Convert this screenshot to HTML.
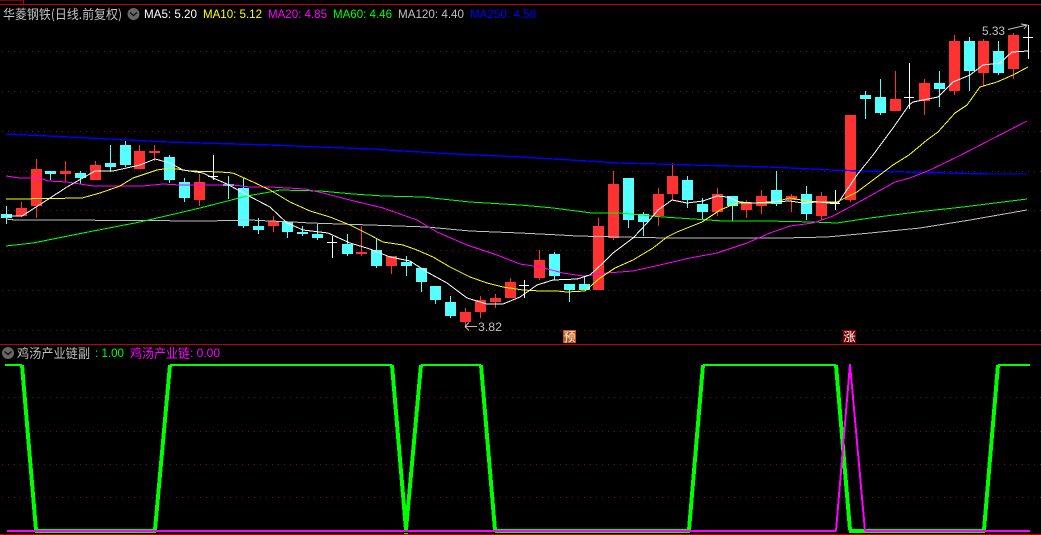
<!DOCTYPE html>
<html>
<head>
<meta charset="utf-8">
<style>
html,body{margin:0;padding:0;background:#000;width:1041px;height:535px;overflow:hidden}
svg{display:block}
text{font-family:"Liberation Sans","Noto Sans CJK SC",sans-serif;font-size:12px}
.cn{font-family:"WenQuanYi Zen Hei","Noto Sans CJK SC",sans-serif;font-size:13px}
.l{fill:none;stroke-width:1;shape-rendering:crispEdges}
.g{stroke:#7a1414;stroke-width:1;stroke-dasharray:1 5;shape-rendering:crispEdges}
</style>
</head>
<body>
<svg width="1041" height="535" viewBox="0 0 1041 535" xmlns="http://www.w3.org/2000/svg">
<rect width="1041" height="535" fill="#000"/>
<!-- frame -->
<g shape-rendering="crispEdges" fill="#c00000">
<rect x="0" y="4" width="1041" height="1"/>
<rect x="0" y="0" width="23" height="1" fill="#800000"/>
<rect x="23" y="0" width="1" height="4"/>
<rect x="0" y="344" width="1041" height="1"/>
<rect x="0" y="534" width="1041" height="1"/>
</g>
<!-- grid -->
<path class="g" d="M2 51.5H1041M2 91.5H1041M2 131.5H1041M2 171.5H1041M2 210.5H1041M2 250.5H1041M2 290.5H1041M2 330.5H1041M2 397.5H1041M2 431.5H1041M2 464.5H1041M2 497.5H1041"/>
<!-- red candles -->
<path shape-rendering="crispEdges" fill="#ff3232" d="M16 208h11v8h-11zM21 202h1v15h-1zM31 169h11v37h-11zM36 159h1v59h-1zM60 171h11v3h-11zM65 161h1v21h-1zM90 165h11v15h-11zM95 161h1v19h-1zM134 151h11v18h-11zM139 145h1v24h-1zM149 151h11v2h-11zM154 145h1v16h-1zM194 182h11v18h-11zM199 174h1v32h-1zM268 221h11v5h-11zM273 216h1v16h-1zM356 252h11v2h-11zM361 226h1v30h-1zM386 256h11v10h-11zM391 256h1v18h-1zM460 312h11v10h-11zM465 308h1v20h-1zM475 300h11v12h-11zM480 296h1v22h-1zM490 298h11v4h-11zM495 294h1v14h-1zM505 282h11v16h-11zM510 278h1v20h-1zM534 260h11v18h-11zM539 250h1v30h-1zM593 226h11v64h-11zM598 218h1v72h-1zM608 184h11v54h-11zM613 171h1v69h-1zM653 194h11v22h-11zM658 188h1v38h-1zM667 176h11v18h-11zM672 163h1v37h-1zM712 194h11v18h-11zM717 188h1v28h-1zM741 202h11v8h-11zM746 200h1v18h-1zM756 196h11v10h-11zM761 190h1v24h-1zM786 196h11v4h-11zM791 194h1v18h-1zM816 196h11v20h-11zM821 192h1v28h-1zM845 115h11v85h-11zM850 115h1v87h-1zM890 99h11v12h-11zM895 71h1v40h-1zM919 83h11v18h-11zM924 79h1v36h-1zM949 41h11v50h-11zM954 35h1v60h-1zM978 41h11v32h-11zM983 39h1v47h-1zM1008 35h11v34h-11zM1013 33h1v46h-1z"/>
<!-- cyan candles -->
<path shape-rendering="crispEdges" fill="#54ffff" d="M1 214h11v4h-11zM6 206h1v18h-1zM45 171h11v3h-11zM50 171h1v9h-1zM75 173h11v5h-11zM80 171h1v13h-1zM105 163h11v4h-11zM110 145h1v27h-1zM120 145h11v20h-11zM125 141h1v26h-1zM164 157h11v23h-11zM169 155h1v28h-1zM179 182h11v16h-11zM184 178h1v24h-1zM223 184h11v2h-11zM228 176h1v23h-1zM238 188h11v38h-11zM243 178h1v50h-1zM253 226h11v4h-11zM258 218h1v16h-1zM282 222h11v10h-11zM287 222h1v16h-1zM297 232h11v2h-11zM302 226h1v10h-1zM312 234h11v4h-11zM317 224h1v16h-1zM342 244h11v10h-11zM347 234h1v22h-1zM371 250h11v16h-11zM376 238h1v30h-1zM401 262h11v4h-11zM406 256h1v20h-1zM416 268h11v14h-11zM421 268h1v24h-1zM430 286h11v14h-11zM435 286h1v18h-1zM445 302h11v14h-11zM450 296h1v22h-1zM549 254h11v22h-11zM554 252h1v28h-1zM564 284h11v6h-11zM569 284h1v18h-1zM579 284h11v6h-11zM584 276h1v14h-1zM623 178h11v42h-11zM628 178h1v50h-1zM638 214h11v8h-11zM643 212h1v24h-1zM682 180h11v20h-11zM687 176h1v32h-1zM697 204h11v8h-11zM702 198h1v22h-1zM727 196h11v10h-11zM732 196h1v25h-1zM771 190h11v14h-11zM776 171h1v35h-1zM801 194h11v20h-11zM806 186h1v34h-1zM860 95h11v4h-11zM865 91h1v28h-1zM875 97h11v16h-11zM880 79h1v36h-1zM934 83h11v6h-11zM939 71h1v36h-1zM964 41h11v30h-11zM969 37h1v54h-1zM993 51h11v22h-11zM998 41h1v34h-1z"/>
<!-- doji -->
<path shape-rendering="crispEdges" fill="#fff" d="M208 176h10v1h-10zM213 155h1v25h-1zM327 242h10v1h-10zM332 236h1v22h-1zM519 285h10v1h-10zM524 280h1v18h-1zM830 203h10v1h-10zM835 190h1v20h-1zM904 97h10v1h-10zM909 63h1v46h-1zM1023 37h10v1h-10zM1028 25h1v34h-1z"/>
<!-- MA250 -->
<polyline class="l" stroke="#0000ff" stroke-width="1.4" style="stroke-width:1.4" points="6,134 90,138 167,142 270,145 370,149 437,153 520,157 620,163 693,165 770,167 830,170 903,172 990,174 1027,174"/>
<!-- MA120 -->
<polyline class="l" stroke="#c0c0c0" points="6,219 15,220 57,220 207,221 250,220 270,221 293,222 310,223 370,225 427,227 470,231 520,233 560,235 577,236 620,237 667,238 783,238 827,237 870,233 920,228 970,220 1027,210"/>
<!-- MA60 -->
<polyline class="l" stroke="#00ff00" points="6,246 33,243 83,233 140,222 200,208 247,196 270,192 280,190 320,191 353,194 383,196 423,197 470,202 520,205 553,208 592,213 620,213 663,217 693,219 723,221 767,221 813,222 837,223 870,218 917,212 963,207 1027,199"/>
<!-- MA20 -->
<polyline class="l" stroke="#ff00ff" points="6,176 20,178 40,178 48,181 67,182 80,184 93,186 143,186 163,184 180,185 233,185 250,187 270,187 305,189 323,193 350,200 383,208 417,220 437,232 467,245 497,255 520,264 540,267 563,273 583,276 607,273 633,271 660,265 690,258 717,253 747,243 770,233 790,226 813,223 833,216 850,207 877,192 895,182 910,178 930,170 957,157 1027,121"/>
<!-- MA10 -->
<polyline class="l" stroke="#ffff00" points="6,199 15,199 82,198 100,193 120,186 133,178 157,170 170,168 190,171 220,172 233,173 253,182 270,190 290,202 310,211 330,217 350,225 370,235 383,242 403,245 417,250 433,257 450,267 470,277 487,283 503,287 523,290 540,291 557,291 567,292 585,291 600,278 615,268 633,260 653,248 667,237 677,232 702,222 720,210 737,203 753,203 770,203 790,198 807,201 820,202 837,202 857,192 873,180 893,165 909,155 927,140 938,132 955,113 967,105 980,87 997,82 1013,75 1028,67"/>
<!-- MA5 -->
<polyline class="l" stroke="#ffffff" points="6,216 22,216 47,200 67,187 95,171 113,171 140,165 155,159 170,163 183,170 203,173 213,178 227,184 247,195 270,207 287,223 303,230 328,233 350,243 370,249 390,257 410,261 427,272 447,283 467,298 487,304 503,304 520,297 537,285 553,280 577,279 590,275 603,263 613,253 633,238 648,222 658,210 672,200 687,203 703,201 717,196 727,197 740,202 753,203 770,202 790,201 803,203 817,202 830,203 838,203 857,175 873,155 893,128 909,105 913,102 938,97 953,82 970,75 983,65 1000,63 1012,52 1028,51"/>
<!-- sub panel -->
<g shape-rendering="crispEdges" fill="#00ff00">
<rect x="5" y="364" width="17" height="2"/>
<rect x="170" y="364" width="222" height="2"/>
<rect x="421" y="364" width="60" height="2"/>
<rect x="703" y="364" width="133" height="2"/>
<rect x="998" y="364" width="32" height="2"/>
<rect x="35" y="529" width="121" height="4"/>
<rect x="495" y="529" width="195" height="4"/>
<rect x="849" y="529" width="136" height="4"/>
<polygon points="20,365 24,365 38,530 34,530"/>
<polygon points="153,530 157,530 172,365 168,365"/>
<polygon points="390,365 394,365 408,530 404,530"/>
<polygon points="404,530 408,530 423,365 419,365"/>
<polygon points="479,365 483,365 497,530 493,530"/>
<polygon points="687,530 691,530 705,365 701,365"/>
<polygon points="834,365 838,365 852,530 848,530"/>
<polygon points="982,530 986,530 1000,365 996,365"/>
</g>
<rect x="404" y="533" width="4" height="1" fill="#00ff00"/>
<g shape-rendering="crispEdges" fill="#ff00ff">
<rect x="7" y="530" width="829" height="2"/>
<rect x="865" y="530" width="165" height="2"/>
<polygon points="835,531 837,531 851,364 849,364"/>
<polygon points="849,364 851,364 866,531 864,531"/>
</g>
<!-- header -->
<text class="cn" x="3" y="19" fill="#c0c0c0" textLength="119" lengthAdjust="spacingAndGlyphs">华菱钢铁(日线.前复权)</text>
<circle cx="133.500" cy="14" r="6" fill="#666"/>
<path d="M130 12.500l3.500 3 3.500-3" fill="none" stroke="#111" stroke-width="1.4"/>
<text x="144" y="18" fill="#ffffff" textLength="53" lengthAdjust="spacingAndGlyphs">MA5: 5.20</text>
<text x="203" y="18" fill="#ffff00" textLength="59" lengthAdjust="spacingAndGlyphs">MA10: 5.12</text>
<text x="268" y="18" fill="#ff00ff" textLength="59" lengthAdjust="spacingAndGlyphs">MA20: 4.85</text>
<text x="333" y="18" fill="#00ff00" textLength="59" lengthAdjust="spacingAndGlyphs">MA60: 4.46</text>
<text x="398" y="18" fill="#c0c0c0" textLength="66" lengthAdjust="spacingAndGlyphs">MA120: 4.40</text>
<text x="470" y="18" fill="#0000ff" textLength="66" lengthAdjust="spacingAndGlyphs">MA250: 4.58</text>
<!-- sub header -->
<circle cx="8" cy="353" r="6" fill="#666"/>
<path d="M4.500 351.500l3.500 3 3.500-3" fill="none" stroke="#111" stroke-width="1.4"/>
<text class="cn" x="17" y="358" fill="#c0c0c0" textLength="73" lengthAdjust="spacingAndGlyphs">鸡汤产业链副</text>
<text x="95" y="357" fill="#00ff00" textLength="29" lengthAdjust="spacingAndGlyphs">: 1.00</text>
<text class="cn" x="130" y="358" fill="#ff00ff" textLength="60" lengthAdjust="spacingAndGlyphs">鸡汤产业链</text>
<text x="190" y="357" fill="#ff00ff" textLength="30" lengthAdjust="spacingAndGlyphs">: 0.00</text>
<!-- price labels -->
<path d="M465 326.500h12M465 326.500l4-4M465 326.500l4 4" fill="none" stroke="#c0c0c0" stroke-width="1"/>
<text x="478" y="331" fill="#c0c0c0" textLength="24" lengthAdjust="spacingAndGlyphs">3.82</text>
<text x="982" y="35" fill="#c0c0c0" textLength="23" lengthAdjust="spacingAndGlyphs">5.33</text>
<path d="M1008 29.500L1027 25M1021 24l6 1-3 4" fill="none" stroke="#c0c0c0" stroke-width="1"/>
<!-- markers -->
<rect x="563" y="330" width="13" height="13" fill="#c0500f" shape-rendering="crispEdges"/>
<text x="563.500" y="341" fill="#fff" style="font-family:'WenQuanYi Zen Hei','Noto Sans CJK SC',sans-serif;font-size:12px">预</text>
<rect x="843" y="330" width="13" height="13" fill="#7f0000" shape-rendering="crispEdges"/>
<text x="843.500" y="341" fill="#fff" style="font-family:'WenQuanYi Zen Hei','Noto Sans CJK SC',sans-serif;font-size:12px">涨</text>
</svg>
</body>
</html>
